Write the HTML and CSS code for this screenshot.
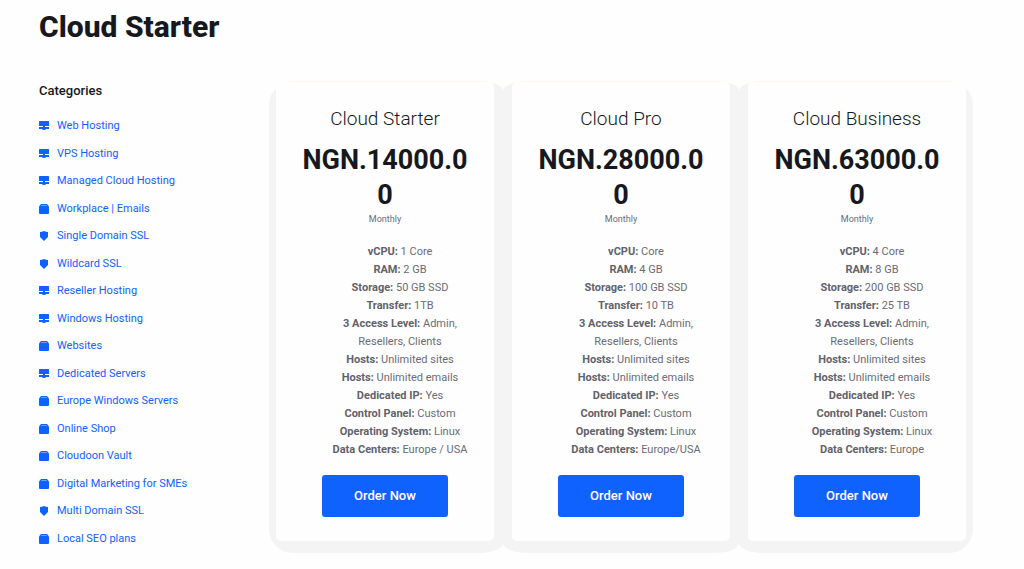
FILE: index.html
```
<!DOCTYPE html>
<html lang="en">
<head>
    <meta charset="UTF-8">
    <meta name="viewport" content="width=device-width, initial-scale=1.0">
    <title>Cloud Starter</title>
    <link rel="stylesheet" href="styles.css">
</head>
<body>

<!-- icons used by the category list -->
<svg class="sprite" aria-hidden="true">
    <symbol id="server" viewBox="0 0 10 10">
        <path d="M.5 0h9q.5 0 .5.500V4.500q0 .5-.5.500h-9Q0 5 0 4.500V.5Q0 0 .5 0z"/>
        <path d="M4 5h2v1h4v2H7q0 1-2 1T3 8H0V6h4z"/>
    </symbol>
    <symbol id="box" viewBox="0 0 10 10">
        <path d="M2 0h6l2 2.500V9q0 1-1 1H1Q0 10 0 9V2.500z"/>
        <path class="lid" d="M2.500 1h5l.7 1H1.800z"/>
    </symbol>
    <symbol id="shield" viewBox="0 0 10 10">
        <path d="M1 1Q3 1 5 0q2 1 4 1v5L5 10 1 6z"/>
    </symbol>
</svg>

<h1>Cloud Starter</h1>

<div class="layout">
    <nav class="sidebar">
        <h2>Categories</h2>
        <ul class="categories">
            <li><a href="#"><svg><use href="#server"/></svg>Web Hosting</a></li>
            <li><a href="#"><svg><use href="#server"/></svg>VPS Hosting</a></li>
            <li><a href="#"><svg><use href="#server"/></svg>Managed Cloud Hosting</a></li>
            <li><a href="#"><svg><use href="#box"/></svg>Workplace | Emails</a></li>
            <li><a href="#"><svg><use href="#shield"/></svg>Single Domain SSL</a></li>
            <li><a href="#"><svg><use href="#shield"/></svg>Wildcard SSL</a></li>
            <li><a href="#"><svg><use href="#server"/></svg>Reseller Hosting</a></li>
            <li><a href="#"><svg><use href="#server"/></svg>Windows Hosting</a></li>
            <li><a href="#"><svg><use href="#box"/></svg>Websites</a></li>
            <li><a href="#"><svg><use href="#server"/></svg>Dedicated Servers</a></li>
            <li><a href="#"><svg><use href="#box"/></svg>Europe Windows Servers</a></li>
            <li><a href="#"><svg><use href="#box"/></svg>Online Shop</a></li>
            <li><a href="#"><svg><use href="#box"/></svg>Cloudoon Vault</a></li>
            <li><a href="#"><svg><use href="#box"/></svg>Digital Marketing for SMEs</a></li>
            <li><a href="#"><svg><use href="#shield"/></svg>Multi Domain SSL</a></li>
            <li><a href="#"><svg><use href="#box"/></svg>Local SEO plans</a></li>
        </ul>
    </nav>

    <main class="plans">
        <div class="plan">
            <div class="card">
                <h3>Cloud Starter</h3>
                <div class="price">NGN.14000.00</div>
                <div class="cycle">Monthly</div>
                <ul class="features">
                    <li><b>vCPU:</b> 1 Core</li>
                    <li><b>RAM:</b> 2 GB</li>
                    <li><b>Storage:</b> 50 GB SSD</li>
                    <li><b>Transfer:</b> 1TB</li>
                    <li><b>3 Access Level:</b> Admin, Resellers, Clients</li>
                    <li><b>Hosts:</b> Unlimited sites</li>
                    <li><b>Hosts:</b> Unlimited emails</li>
                    <li><b>Dedicated IP:</b> Yes</li>
                    <li><b>Control Panel:</b> Custom</li>
                    <li><b>Operating System:</b> Linux</li>
                    <li><b>Data Centers:</b> Europe / USA</li>
                </ul>
                <button class="order">Order Now</button>
            </div>
        </div>

        <div class="plan">
            <div class="card">
                <h3>Cloud Pro</h3>
                <div class="price">NGN.28000.00</div>
                <div class="cycle">Monthly</div>
                <ul class="features">
                    <li><b>vCPU:</b> Core</li>
                    <li><b>RAM:</b> 4 GB</li>
                    <li><b>Storage:</b> 100 GB SSD</li>
                    <li><b>Transfer:</b> 10 TB</li>
                    <li><b>3 Access Level:</b> Admin, Resellers, Clients</li>
                    <li><b>Hosts:</b> Unlimited sites</li>
                    <li><b>Hosts:</b> Unlimited emails</li>
                    <li><b>Dedicated IP:</b> Yes</li>
                    <li><b>Control Panel:</b> Custom</li>
                    <li><b>Operating System:</b> Linux</li>
                    <li><b>Data Centers:</b> Europe/USA</li>
                </ul>
                <button class="order">Order Now</button>
            </div>
        </div>

        <div class="plan">
            <div class="card">
                <h3>Cloud Business</h3>
                <div class="price">NGN.63000.00</div>
                <div class="cycle">Monthly</div>
                <ul class="features">
                    <li><b>vCPU:</b> 4 Core</li>
                    <li><b>RAM:</b> 8 GB</li>
                    <li><b>Storage:</b> 200 GB SSD</li>
                    <li><b>Transfer:</b> 25 TB</li>
                    <li><b>3 Access Level:</b> Admin, Resellers, Clients</li>
                    <li><b>Hosts:</b> Unlimited sites</li>
                    <li><b>Hosts:</b> Unlimited emails</li>
                    <li><b>Dedicated IP:</b> Yes</li>
                    <li><b>Control Panel:</b> Custom</li>
                    <li><b>Operating System:</b> Linux</li>
                    <li><b>Data Centers:</b> Europe</li>
                </ul>
                <button class="order">Order Now</button>
            </div>
        </div>
    </main>
</div>

</body>
</html>
```
FILE: styles.css
```
body {
    font-family: Roboto, sans-serif;
    font-size: 11px;
    margin: 0;
    padding: 8px 51px 15px 39px;
    background-color: #fefefe;
    color: #16181d;
}
h1, h2, h3, ul {
    margin: 0;
    padding: 0;
}
ul {
    list-style: none;
}
h1 {
    font-size: 30px;
    line-height: 38px;
    font-weight: 800;
    margin-bottom: 35px;
}
.sprite {
    display: none;
}
.layout {
    display: grid;
    grid-template-columns: 230px 1fr;
}

/* sidebar */
.sidebar {
    display: flex;
    flex-direction: column;
    padding-bottom: 5px;
}
h2 {
    font-size: 13px;
    line-height: 20px;
    font-weight: 500;
    margin-bottom: 16px;
}
.categories {
    flex: 1;
    display: flex;
    flex-direction: column;
    justify-content: space-between;
}
.categories a {
    display: flex;
    align-items: center;
    gap: 8px;
    line-height: 18px;
    color: #1062fe;
    text-decoration: none;
}
.categories svg {
    width: 10px;
    height: 10px;
    fill: #1062fe;
}
.lid {
    fill: #6c9ffe;
}

/* plans */
.plans {
    display: flex;
}
.plan {
    flex: 1;
    padding: 0 9px 12px;
    border-top: 1px solid #fef6ea;
    border-radius: 24px / 10px;
    background-color: #f4f4f4;
}
.plan:first-child {
    padding-left: 7px;
    border-radius: 24px / 24px 10px 10px 24px;
}
.plan:last-child {
    padding-right: 7px;
    border-radius: 24px / 10px 24px 24px 10px;
}
.card {
    padding: 24px 25px;
    border-radius: 5px;
    background-color: #fefefe;
    text-align: center;
}
h3 {
    font-size: 19px;
    line-height: 26px;
    font-weight: 300;
    margin-bottom: 11px;
}
.price {
    font-size: 27px;
    line-height: 35px;
    font-weight: 700;
    overflow-wrap: anywhere;
}
.cycle {
    font-size: 9px;
    line-height: 12px;
    color: #6b6b76;
    margin-bottom: 18px;
}
.features {
    padding-left: 30px;
    line-height: 18px;
    color: #6b6b76;
}
.features b {
    color: #62626c;
}
.order {
    font-family: inherit;
    font-size: 13px;
    line-height: 18px;
    font-weight: 500;
    margin-top: 16px;
    padding: 12px 32px;
    border: none;
    border-radius: 3px;
    background-color: #1062fe;
    color: #fff;
    cursor: pointer;
}
```
